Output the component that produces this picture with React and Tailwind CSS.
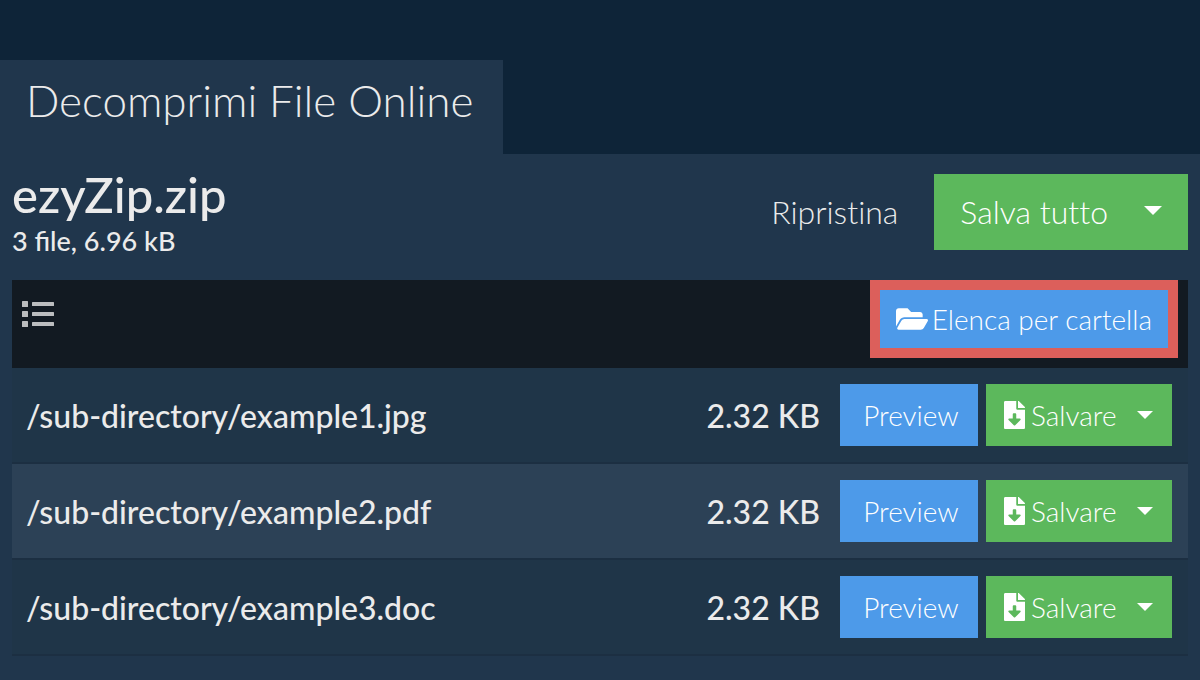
import { FaFolderOpen } from 'react-icons/fa';

const FILES = [
  { path: '/sub-directory/example1.jpg', size: '2.32 KB' },
  { path: '/sub-directory/example2.pdf', size: '2.32 KB' },
  { path: '/sub-directory/example3.doc', size: '2.32 KB' },
];

function Caret({ className }) {
  return (
    <svg viewBox="0 0 18 9" className={className} fill="currentColor" aria-hidden="true">
      <path d="M0 0h18L9 9z" />
    </svg>
  );
}

function ListIcon() {
  return (
    <svg viewBox="0 0 32 26" className="h-[26px] w-8" fill="currentColor" aria-hidden="true">
      {[0, 10, 20].map((y) => (
        <g key={y}>
          <rect x="0" y={y} width="6" height="6" rx="0.5" />
          <rect x="10" y={y + 1} width="22" height="4" rx="0.5" />
        </g>
      ))}
    </svg>
  );
}

function FileDownloadIcon() {
  return (
    <svg viewBox="0 0 384 512" className="h-7 w-[21px] shrink-0" fill="currentColor" aria-hidden="true">
      <path d="M224 136V0H24C10.700 0 0 10.700 0 24v464c0 13.300 10.700 24 24 24h336c13.300 0 24-10.700 24-24V160H248c-13.200 0-24-10.800-24-24zm76.450 211.360l-96.420 95.700c-6.650 6.610-17.390 6.610-24.040 0l-96.420-95.700C73.420 337.290 80.540 320 94.820 320H160v-80c0-8.840 7.160-16 16-16h32c8.840 0 16 7.160 16 16v80h65.180c14.280 0 21.400 17.290 11.270 27.360zM377 105L279.100 7c-4.500-4.500-10.600-7-17-7H256v128h128v-6.100c0-6.300-2.500-12.400-7-16.900z" />
    </svg>
  );
}

function App() {
  return (
    <div className="min-h-screen bg-[#0e2438] pt-[60px] font-['Lato',sans-serif] text-[#ebebeb]">
      <h1 className="flex h-[94px] w-fit items-center bg-[#20364c] pr-[30px] pb-[14px] pl-[26px] text-[44px] leading-none font-light">
        Decomprimi File Online
      </h1>

      <main className="bg-[#20364c] px-3 pt-5 pb-6">
        {/* Archive summary */}
        <header className="flex h-[106px] items-start justify-between">
          <div>
            <h2 className="text-[49px] leading-[40px] font-medium">ezyZip.zip</h2>
            <p className="mt-3 text-[27px] leading-[30px] font-medium">3 file, 6.96 kB</p>
          </div>
          <div className="flex items-center text-[32px] font-light [font-variant-ligatures:none]">
            <button type="button" className="px-9">Ripristina</button>
            <button type="button" className="flex h-[76px] items-center bg-[#5cb85c] px-[26px] text-white">
              <span className="mr-9">Salva tutto</span>
              <Caret className="mb-1 h-[9px] w-[18px]" />
            </button>
          </div>
        </header>

        {/* Toolbar */}
        <div className="flex h-[88px] items-start justify-between bg-[#121a22] px-[10px]">
          <button type="button" aria-label="Elenco" className="mt-[21px] text-[#bbbdbf]">
            <ListIcon />
          </button>
          <button type="button" className="flex h-[78px] items-center gap-1 border-10 border-[#dc5f5b] bg-[#4d9ae9] px-4 text-[28px] font-light text-white">
            <FaFolderOpen size={32} />
            Elenca per cartella
          </button>
        </div>

        <table className="w-full border-separate border-spacing-0 [&_td]:border-b-2 [&_td]:border-[#1c2f42]">
          <tbody>
            {FILES.map((file) => (
              <tr key={file.path} className="h-24 bg-[#1f3548] even:bg-[#2c4156]">
                <td className="pt-[2px] pl-[14px] text-[32px] font-medium">{file.path}</td>
                <td className="pt-[2px] pr-5 text-right text-[32px] font-medium">{file.size}</td>
                <td className="w-[348px]">
                  <div className="flex gap-2 pr-4 text-[28px] font-light text-white">
                    <button type="button" className="h-[62px] w-[138px] bg-[#4d9ae9] pl-1">Preview</button>
                    <button type="button" className="flex h-[62px] w-[186px] items-center bg-[#5cb85c] pl-[18px]">
                      <FileDownloadIcon />
                      <span className="mr-5 ml-[6px]">Salvare</span>
                      <Caret className="h-2 w-4" />
                    </button>
                  </div>
                </td>
              </tr>
            ))}
          </tbody>
        </table>
      </main>
    </div>
  );
}

export default App;
